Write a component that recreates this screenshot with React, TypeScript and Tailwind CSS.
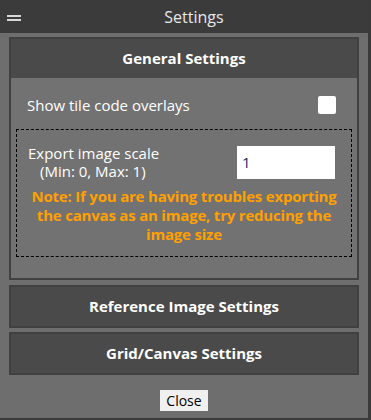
function Panel({ title, children }: { title: string; children?: React.ReactNode }) {
  return (
    <div className="border-2 border-[#404040]">
      <div className="h-[39px] bg-[#4a4a4a] flex items-center justify-center text-white font-bold text-[15px]">
        {title}
      </div>
      {children}
    </div>
  );
}

export default function App() {
  return (
    <div
      className="w-[371px] h-[420px] bg-[#6e6e6e] border-r-[3px] border-b-2 border-[#3a3a3a] flex flex-col"
      style={{ fontFamily: '"Open Sans", "Noto Sans", sans-serif' }}
    >
      <div className="relative h-[33px] shrink-0 bg-[#3b3b3b] flex items-center justify-center pl-[20px] text-[#e8e8e8] text-[16px]">
        <div className="absolute left-[7px] top-[15px] flex flex-col gap-[2px]">
          <div className="w-[14px] h-[2px] bg-[#d8d8d8]" />
          <div className="w-[14px] h-[2px] bg-[#d8d8d8]" />
        </div>
        Settings
      </div>

      <div className="flex flex-col px-[9px] pt-[4px]">
        <Panel title="General Settings">
          <div className="bg-[#727272] px-[5px] pt-[17px] pb-[21px]">
            <div className="flex items-center justify-between pl-[11px] pr-[16px] h-[20px] text-white text-[15px]">
              <span>Show tile code overlays</span>
              <div className="w-[18px] h-[18px] bg-white rounded-[2px]" />
            </div>
            <div className="mt-[14px] border border-dashed border-black px-[4px] pt-[14px] pb-[12px]">
              <div className="flex items-center justify-between pl-[7px] pr-[12px]">
                <div className="text-white text-[15px] leading-[18px]">
                  <div>Export image scale</div>
                  <div className="pl-[12px]">(Min: 0, Max: 1)</div>
                </div>
                <input
                  defaultValue="1"
                  className="w-[98px] h-[33px] bg-white px-[5px] text-[15px] text-[#1a2a6a] outline-none"
                />
              </div>
              <div className="mt-[7px] text-[#ffa000] font-bold text-[15px] leading-[19px] text-center tracking-[-0.2px]">
                Note: If you are having troubles exporting the canvas as an image, try reducing the image size
              </div>
            </div>
          </div>
        </Panel>
        <div className="mt-[5px]">
          <Panel title="Reference Image Settings" />
        </div>
        <div className="mt-[4px]">
          <Panel title="Grid/Canvas Settings" />
        </div>
        <div className="flex justify-center mt-[15px]">
          <button className="h-[21px] px-[6px] bg-[#f0f0f0] text-black text-[14px] leading-[21px]">Close</button>
        </div>
      </div>
    </div>
  );
}
